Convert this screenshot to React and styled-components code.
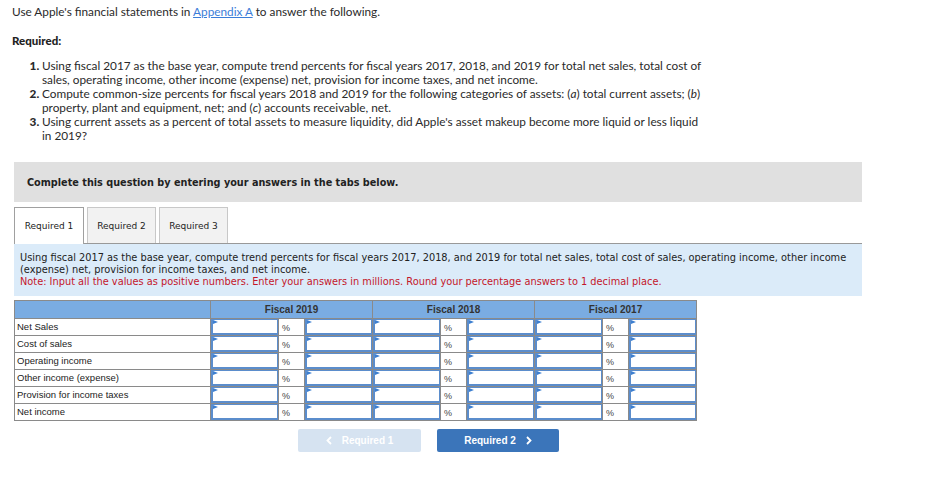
import React from "react";
import styled, { createGlobalStyle } from "styled-components";

const Global = createGlobalStyle`
  html, body { margin: 0; padding: 0; background: #fff; }
  body { font-family: Lato, "Open Sans", sans-serif; color: #222; }
`;

const Page = styled.div`
  width: 927px;
  padding: 5px 0 0 0;
`;

const Intro = styled.p`
  margin: 0 0 0 12px;
  font-family: Lato, sans-serif;
  font-size: 11.8px;
  line-height: 14px;
  color: #2a2a2a;
  a { color: #3b7dd8; text-decoration: underline; }
`;

const RequiredTitle = styled.p`
  margin: 15px 0 0 12px;
  font-family: Lato, sans-serif;
  font-weight: 900;
  font-size: 11.5px;
  line-height: 14px;
  color: #222;
`;

const List = styled.ol`
  margin: 11px 0 0 0;
  padding: 0 0 0 42px;
  width: 665px;
  font-family: Lato, sans-serif;
  font-size: 11.8px;
  line-height: 14px;
  color: #2a2a2a;
  li::marker { font-weight: 900; }
  i { font-style: italic; }
`;

const Section = styled.div`
  margin: 19px 0 0 14px;
  width: 848px;
`;

const Banner = styled.div`
  height: 40px;
  background: #e0e0e0;
  display: flex;
  align-items: center;
  padding-left: 13px;
  font-family: "DejaVu Sans", Verdana, sans-serif;
  font-weight: bold;
  font-size: 9.7px;
  color: #222;
`;

const Tabs = styled.div`
  margin-top: 5px;
  display: flex;
  align-items: flex-start;
  gap: 3px;
  border-bottom: 1px solid #999;
  height: 36px;
`;

const Tab = styled.div`
  width: ${(p) => (p.$active ? 70 : 69)}px;
  height: ${(p) => (p.$active ? 37 : 36)}px;
  box-sizing: border-box;
  display: flex;
  align-items: center;
  justify-content: center;
  font-family: "DejaVu Sans", Verdana, sans-serif;
  font-size: 9px;
  color: #222;
  background: ${(p) => (p.$active ? "#fff" : "#f2f2f2")};
  border: 1px solid ${(p) => (p.$active ? "#a0a0a0" : "#c8c8c8")};
  border-bottom: none;
  position: relative;
  z-index: 1;
`;

const Info = styled.div`
  background: #dbebf9;
  padding: 8px 6px 8px 6px;
  font-family: "DejaVu Sans", Verdana, sans-serif;
  font-size: 9.8px;
  line-height: 12px;
  color: #222;
`;

const Note = styled.span`
  color: #c4162a;
`;

const Table = styled.table`
  margin-top: 4px;
  border-collapse: collapse;
  table-layout: fixed;
  width: 682px;
  font-family: "Liberation Sans", Arial, sans-serif;
  font-size: 9.5px;
  color: #222;
`;

const HeadCell = styled.th`
  height: 17px;
  padding: 0;
  background: #7aace2;
  border: 1px solid #8a8a8a;
  font-weight: bold;
  font-size: 10px;
  color: #333;
`;

const LabelCell = styled.td`
  height: 16px;
  padding: 0 0 0 2px;
  border: 1px solid #8a8a8a;
  white-space: nowrap;
  line-height: 16px;
`;

const InputCell = styled.td`
  height: 16px;
  padding: 0;
  border: 1px solid #8a8a8a;
`;

const InputBox = styled.div`
  position: relative;
  height: 16px;
  box-sizing: border-box;
  border: 1px solid #5b8dcc;
  border-left-width: 2px;
  border-bottom-width: 2px;
  background: #fff;
  &::before {
    content: "";
    position: absolute;
    left: 0;
    top: 0;
    border-top: 2.5px solid transparent;
    border-bottom: 2.5px solid transparent;
    border-left: 5px solid #3d7fd0;
  }
`;

const PctCell = styled.td`
  height: 16px;
  padding: 2px 0 0 3px;
  box-sizing: border-box;
  line-height: 14px;
  border: 1px solid #8a8a8a;
  font-size: 9px;
  color: #444;
  vertical-align: middle;
`;

const Nav = styled.div`
  display: flex;
  gap: 16px;
  margin-top: 8px;
  padding-left: 284px;
`;

const NavButton = styled.div`
  width: ${(p) => p.$w}px;
  height: 23px;
  border-radius: 2px;
  display: flex;
  align-items: center;
  justify-content: center;
  gap: 10px;
  background: ${(p) => (p.$disabled ? "#d6e3f1" : "#3b75ba")};
  color: #fff;
  font-family: "Liberation Sans", Arial, sans-serif;
  font-weight: bold;
  font-size: 10px;
`;

const Chevron = ({ dir }) => (
  <svg width="6" height="9" viewBox="0 0 6 9">
    <path
      d={dir === "left" ? "M5 1 L1.5 4.5 L5 8" : "M1 1 L4.5 4.5 L1 8"}
      stroke="#fff"
      strokeWidth="1.8"
      fill="none"
    />
  </svg>
);

const rows = [
  "Net Sales",
  "Cost of sales",
  "Operating income",
  "Other income (expense)",
  "Provision for income taxes",
  "Net income",
];
const years = ["Fiscal 2019", "Fiscal 2018", "Fiscal 2017"];

export default function App() {
  return (
    <Page>
      <Global />
      <Intro>
        Use Apple's financial statements in <a>Appendix A</a> to answer the following.
      </Intro>
      <RequiredTitle>Required:</RequiredTitle>
      <List>
        <li>
          Using fiscal 2017 as the base year, compute trend percents for fiscal years 2017, 2018, and 2019 for total net sales, total cost of sales, operating income, other income (expense) net, provision for income taxes, and net income.
        </li>
        <li>
          Compute common-size percents for fiscal years 2018 and 2019 for the following categories of assets: (<i>a</i>) total current assets; (<i>b</i>) property, plant and equipment, net; and (<i>c</i>) accounts receivable, net.
        </li>
        <li>
          Using current assets as a percent of total assets to measure liquidity, did Apple's asset makeup become more liquid or less liquid in 2019?
        </li>
      </List>
      <Section>
        <Banner>Complete this question by entering your answers in the tabs below.</Banner>
        <Tabs>
          <Tab $active>Required 1</Tab>
          <Tab>Required 2</Tab>
          <Tab>Required 3</Tab>
        </Tabs>
        <Info>
          Using fiscal 2017 as the base year, compute trend percents for fiscal years 2017, 2018, and 2019 for total net sales, total cost of sales, operating income, other income (expense) net, provision for income taxes, and net income.
          <br />
          <Note>
            Note: Input all the values as positive numbers. Enter your answers in millions. Round your percentage answers to 1 decimal place.
          </Note>
        </Info>
        <Table>
          <colgroup>
            <col style={{ width: 196 }} />
            {years.map((y) => (
              <React.Fragment key={y}>
                <col style={{ width: 68 }} />
                <col style={{ width: 26 }} />
                <col style={{ width: 68 }} />
              </React.Fragment>
            ))}
          </colgroup>
          <thead>
            <tr>
              <HeadCell />
              {years.map((y) => (
                <HeadCell key={y} colSpan={3}>
                  {y}
                </HeadCell>
              ))}
            </tr>
          </thead>
          <tbody>
            {rows.map((r) => (
              <tr key={r}>
                <LabelCell>{r}</LabelCell>
                {years.map((y) => (
                  <React.Fragment key={y}>
                    <InputCell>
                      <InputBox />
                    </InputCell>
                    <PctCell>%</PctCell>
                    <InputCell>
                      <InputBox />
                    </InputCell>
                  </React.Fragment>
                ))}
              </tr>
            ))}
          </tbody>
        </Table>
        <Nav>
          <NavButton $disabled $w={123}>
            <Chevron dir="left" />
            Required 1
          </NavButton>
          <NavButton $w={122}>
            Required 2
            <Chevron dir="right" />
          </NavButton>
        </Nav>
      </Section>
    </Page>
  );
}
